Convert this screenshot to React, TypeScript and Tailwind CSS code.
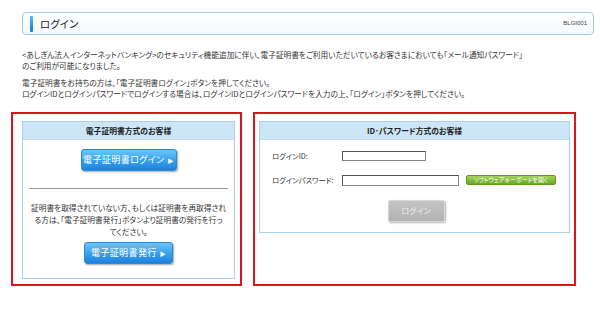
import React from 'react';

const jp = "font-['Noto_Sans_CJK_JP','Noto_Sans',sans-serif] [font-feature-settings:'palt']";

function BlueButton({ label, width }: { label: string; width: string }) {
  return (
    <button className={`${width} h-[22px] rounded-[3px] border border-[#2b8ad6] bg-gradient-to-b from-[#6cc4f8] via-[#3aa3ee] to-[#1d80dc] text-white text-[9px] tracking-[0.4px] whitespace-nowrap flex items-center justify-center gap-[3px] shadow-[1px_1px_2px_rgba(0,0,0,0.35)]`}>
      <span>{label}</span>
      <span className="text-[6px]">▶</span>
    </button>
  );
}

function PanelHead({ title }: { title: string }) {
  return (
    <div className="h-[18px] bg-[#cce6f8] border-b border-dotted border-[#b9cfdc] flex items-center justify-center text-[7.8px] font-bold text-[#222]">
      {title}
    </div>
  );
}

export default function App() {
  return (
    <div className={`w-[600px] h-[319px] bg-white text-[#333] ${jp}`}>
      <div className="pt-[12px] pl-[22px] pr-[6px]">
        <div className="h-[23px] rounded-[4px] border border-[#9fcbe5] bg-gradient-to-b from-white to-[#f3f9fd] flex items-center pl-[7px] pr-[6px]">
          <div className="w-[3px] h-[16px] rounded-[1px] bg-gradient-to-b from-[#58b6f5] to-[#1679d4]" />
          <span className="ml-[7px] text-[10.5px] text-[#222]">ログイン</span>
          <span className="ml-auto text-[6px] text-[#444] font-['Liberation_Sans',sans-serif]">BLGI001</span>
        </div>
      </div>

      <div className="pl-[22px] pr-[4px] mt-[14px] text-[7.7px] leading-[11px] text-[#333] whitespace-nowrap">
        <p>&lt;あしぎん法人インターネットバンキング&gt;のセキュリティ機能追加に伴い、電子証明書をご利用いただいているお客さまにおいても「メール通知パスワード」</p>
        <p>のご利用が可能になりました。</p>
        <p className="mt-[6px]">電子証明書をお持ちの方は、「電子証明書ログイン」ボタンを押してください。</p>
        <p>ログインIDとログインパスワードでログインする場合は、ログインIDとログインパスワードを入力の上、「ログイン」ボタンを押してください。</p>
      </div>

      <div className="flex gap-[11px] pl-[11px] mt-[13px]">
        <div className="w-[231px] h-[174px] border-2 border-[#e0121c] pl-[9px] pr-[5px] pt-[7px]">
          <div className="border border-[#a9d3ee] h-[158px] flex flex-col">
            <PanelHead title="電子証明書方式のお客様" />
            <div className="flex justify-center mt-[9px]">
              <BlueButton label="電子証明書ログイン" width="w-[96px]" />
            </div>
            <div className="mx-[6px] mt-[17px] border-t border-[#999]" />
            <div className="mt-[13px] text-center text-[7.7px] leading-[12px] text-[#333] whitespace-nowrap">
              証明書を取得されていない方、もしくは証明書を再取得され
              <br />
              る方は、「電子証明書発行」ボタンより証明書の発行を行っ
              <br />
              てください。
            </div>
            <div className="flex justify-center mt-[4px]">
              <BlueButton label="電子証明書発行" width="w-[89px]" />
            </div>
          </div>
        </div>

        <div className="w-[323px] h-[174px] border-2 border-[#e0121c] pl-[4px] pr-[4px] pt-[7px]">
          <div className="border border-[#a9d3ee] h-[112px] flex flex-col">
            <PanelHead title="ID･パスワード方式のお客様" />
            <div className="pl-[12px] mt-[11px] flex items-center text-[7.3px] text-[#333]">
              <span className="w-[70px]">ログインID:</span>
              <div className="w-[84px] h-[10px] border border-[#888] border-t-[#555] border-l-[#555] bg-white" />
            </div>
            <div className="pl-[12px] mt-[13px] flex items-center text-[7.3px] text-[#333]">
              <span className="w-[70px]">ログインパスワード:</span>
              <div className="w-[117px] h-[11px] border border-[#888] border-t-[#555] border-l-[#555] bg-white" />
              <button className="ml-[7px] w-[90px] h-[10px] rounded-[2px] border border-[#5e9a1e] bg-gradient-to-b from-[#a3d45a] to-[#6aa825] text-white text-[6px] leading-none whitespace-nowrap flex items-center justify-center">
                ソフトウェアキーボードを開く
              </button>
            </div>
            <div className="flex justify-center mt-[14px] pl-[3px]">
              <button className="w-[57px] h-[22px] rounded-[2px] border border-[#d8d8d8] bg-gradient-to-b from-[#c4c4c4] to-[#b2b2b2] text-[#eee] text-[8px] shadow-[1px_1px_2px_rgba(0,0,0,0.3)]">
                ログイン
              </button>
            </div>
          </div>
        </div>
      </div>
    </div>
  );
}
